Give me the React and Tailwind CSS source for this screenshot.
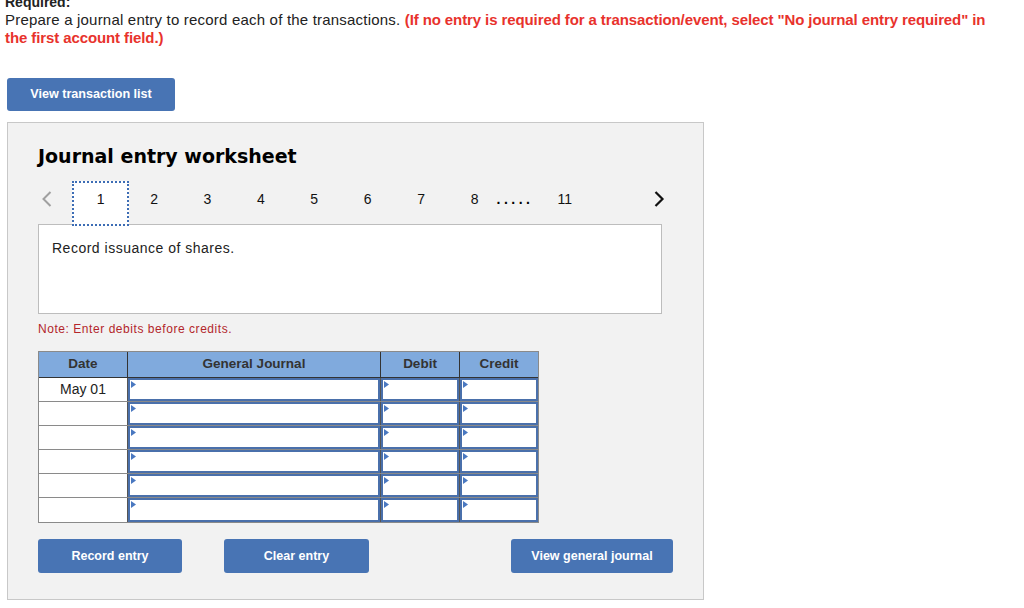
import React from "react";

const Tri = () => (
  <svg className="absolute left-[1px] top-[1px]" width="5" height="7" viewBox="0 0 5 7">
    <polygon points="0,0 5,3.5 0,7" fill="#4a78c0" />
  </svg>
);

function InputCell() {
  return (
    <div className="relative w-full h-full bg-white border-2 border-[#4a70ab]">
      <Tri />
    </div>
  );
}

export default function App() {
  const rows = ["May 01", "", "", "", "", ""];
  const nums = ["2", "3", "4", "5", "6", "7"];
  return (
    <div className="w-[1024px] h-[608px] overflow-hidden bg-white text-[#222] font-['Liberation_Sans',Arial,sans-serif]">
      <div className="px-[5px]">
        <div className="-mt-[7px] h-[18px] leading-[18px] text-[14px] font-bold text-[#222]">Required:</div>
        <p className="text-[15px] leading-[18px] text-[#222] tracking-[0.2px]">
          Prepare a journal entry to record each of the transactions.{" "}
          <span className="font-bold text-[#e8322c] tracking-[-0.1px]">
            (If no entry is required for a transaction/event, select "No journal entry required" in
            <br />
            the first account field.)
          </span>
        </p>
      </div>

      <button className="ml-[7px] mt-[31px] w-[168px] h-[33px] rounded-[3px] bg-[#4874b4] text-white text-[12.6px] font-bold block">
        View transaction list
      </button>

      <div className="ml-[7px] mt-[11px] w-[697px] h-[478px] border border-[#c8c8c8] bg-[#f2f2f2] pl-[30px] pt-[21px]">
        <h2 className="text-[19px] leading-[24px] font-bold text-black font-['DejaVu_Sans',Verdana,sans-serif]">
          Journal entry worksheet
        </h2>

        <div className="mt-[13px] h-[44px] flex items-start text-[14px] text-[#111]">
          <div className="w-[36px] h-[36px] flex items-center pl-[3px]">
            <svg width="12" height="18" viewBox="0 0 12 18">
              <polyline points="9.5,2 2.5,9 9.5,16" fill="none" stroke="#a0a0a0" strokeWidth="2" />
            </svg>
          </div>
          <div className="w-[53.4px] flex justify-center">
            <div className="w-[57px] shrink-0 h-[45px] bg-white border-[2px] border-dotted border-[#3d6db5] leading-[32px] text-center relative z-10">
              1
            </div>
          </div>
          {nums.map((n) => (
            <div key={n} className="w-[53.4px] text-center leading-[36px]">
              {n}
            </div>
          ))}
          <div className="ml-[23px] leading-[36px]">8</div>
          <div className="ml-[18px] leading-[36px] font-bold tracking-[3.5px] text-black">.....</div>
          <div className="ml-[24px] leading-[36px]">11</div>
          <div className="ml-[81px] h-[36px] flex items-center">
            <svg width="12" height="18" viewBox="0 0 12 18">
              <polyline points="2.5,2 9.5,9 2.5,16" fill="none" stroke="#111" strokeWidth="2.2" />
            </svg>
          </div>
        </div>

        <div className="-mt-[1px] w-[624px] h-[90px] bg-white border border-[#bdbdbd] pl-[13px] pt-[13px] text-[14px] leading-[20px] text-[#222] tracking-[0.5px]">
          Record issuance of shares.
        </div>

        <div className="mt-[7px] text-[12px] leading-[16px] text-[#b3262b] tracking-[0.55px]">
          Note: Enter debits before credits.
        </div>

        <div className="mt-[14px] w-[501px] border border-[#8a8a8a] bg-white">
          <div className="flex h-[26px] bg-[#80aadd] border-b border-[#333] text-[13.5px] font-bold text-[#333]">
            <div className="w-[89px] border-r border-[#333] flex items-center justify-center">Date</div>
            <div className="w-[253px] border-r border-[#333] flex items-center justify-center">General Journal</div>
            <div className="w-[79px] border-r border-[#333] flex items-center justify-center">Debit</div>
            <div className="w-[78px] flex items-center justify-center">Credit</div>
          </div>
          {rows.map((d, i) => (
            <div key={i} className={`flex h-[24px] ${i < rows.length - 1 ? "border-b border-[#8a8a8a]" : ""}`}>
              <div className="w-[89px] border-r border-[#555] flex items-center justify-center text-[14px] text-[#222]">
                {d}
              </div>
              <div className="w-[253px] border-r border-[#555] h-full">
                <InputCell />
              </div>
              <div className="w-[79px] border-r border-[#555] h-full">
                <InputCell />
              </div>
              <div className="w-[78px] h-full">
                <InputCell />
              </div>
            </div>
          ))}
        </div>

        <div className="mt-[16px] flex text-[12.5px] font-bold text-white">
          <button className="w-[144px] h-[34px] rounded-[3px] bg-[#4874b4]">Record entry</button>
          <button className="ml-[42px] w-[145px] h-[34px] rounded-[3px] bg-[#4874b4]">Clear entry</button>
          <button className="ml-[142px] w-[162px] h-[34px] rounded-[3px] bg-[#4874b4]">View general journal</button>
        </div>
      </div>
    </div>
  );
}
